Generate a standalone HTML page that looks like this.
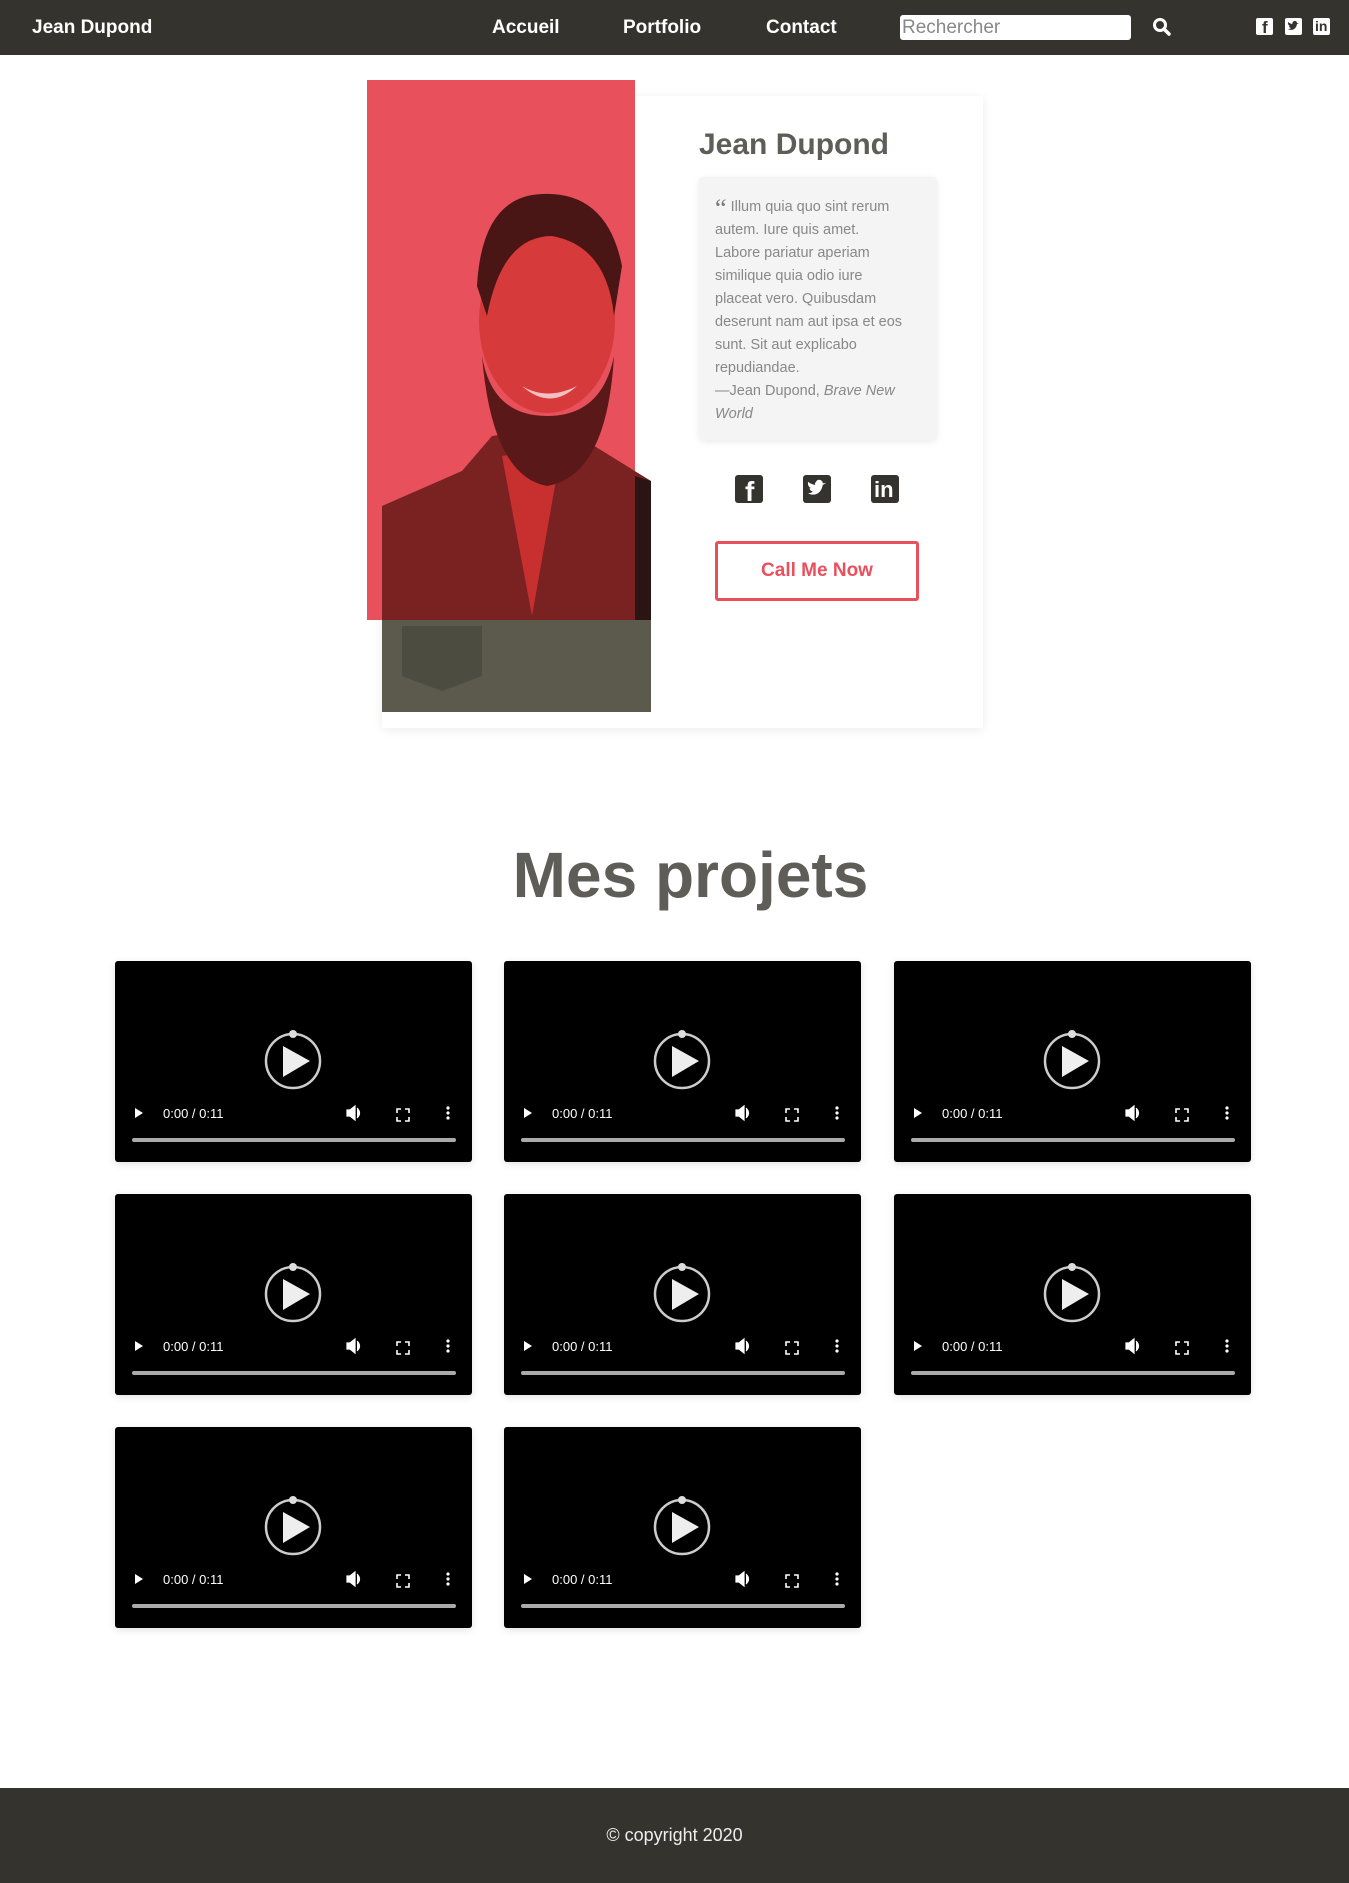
<!DOCTYPE html>
<html><head><meta charset="utf-8">
<style>
*{margin:0;padding:0;box-sizing:border-box}
body{width:1349px;height:1883px;position:relative;background:#fff;font-family:"Liberation Sans",sans-serif;overflow:hidden}
.nav{position:absolute;left:0;top:0;width:1349px;height:55px;background:#35332e;color:#fff;font-weight:bold}
.nav .t{position:absolute;top:17px;font-size:19px}
.search{position:absolute;left:900px;top:15px;width:231px;height:25px;background:#fff;border-radius:3px;color:#888;font-size:19px;font-weight:normal;padding-left:2px;line-height:25px}
.ni{position:absolute;top:18px;width:17px;height:17px;background:#fff;border-radius:2px}
.card{position:absolute;left:382px;top:96px;width:601px;height:632px;background:#fff;box-shadow:0 2px 10px rgba(0,0,0,.08)}
.red{position:absolute;left:367px;top:80px;width:268px;height:540px;background:#e8505c}
.name{position:absolute;left:699px;top:128px;font-size:30px;font-weight:bold;color:#5e5d58}
.quote{position:absolute;left:699px;top:177px;width:238px;height:263px;background:#f4f4f4;box-shadow:0 2px 8px rgba(0,0,0,.08);border-radius:4px;padding:19px 16px;font-size:14.5px;line-height:23px;color:#888;font-weight:300;white-space:nowrap}
.si{position:absolute;top:475px;width:28px;height:28px;background:#35332e;border-radius:3px}
.btn{position:absolute;left:715px;top:541px;width:204px;height:60px;border:3px solid #e8505c;border-radius:3px;color:#e8505c;font-weight:bold;font-size:19px;text-align:center;line-height:54px}
h2{position:absolute;left:16px;width:1349px;top:838px;text-align:center;font-size:64px;color:#5e5d58}
.v{position:absolute;width:357px;height:201px;background:#000;border-radius:3px;box-shadow:0 2px 8px rgba(0,0,0,.12)}
.v svg{position:absolute;left:0;top:0}
.foot{position:absolute;left:0;top:1788px;width:1349px;height:95px;background:#35332e;color:#eee;text-align:center;font-size:18px;line-height:95px;font-weight:300}
</style></head><body>
<div class="nav">
<div class="t" style="left:32px">Jean Dupond</div>
<div class="t" style="left:492px">Accueil</div>
<div class="t" style="left:623px">Portfolio</div>
<div class="t" style="left:766px">Contact</div>
<div class="search">Rechercher</div>
<svg style="position:absolute;left:1152px;top:17px" width="20" height="20" viewBox="0 0 20 20"><circle cx="8" cy="8" r="5.5" fill="none" stroke="#fff" stroke-width="3"/><line x1="12" y1="12" x2="17" y2="17" stroke="#fff" stroke-width="3.5" stroke-linecap="round"/></svg>
<div class="ni" style="left:1256px"><span style="position:absolute;left:6px;top:0;color:#35332e;font-size:17px">f</span></div>
<div class="ni" style="left:1285px"><svg width="17" height="17" viewBox="0 0 17 17"><path d="M3 11c3 2 8 1 9-5l2-1-2 0c0-2-3-3-4-1-1 1-1 2 0 2C6 6 4 5 3 4c0 2 0 3 2 4H4c0 1 1 2 2 2-1 1-2 1-3 1z" fill="#35332e"/></svg></div>
<div class="ni" style="left:1313px"><span style="position:absolute;left:2px;top:0;color:#35332e;font-size:14px;font-weight:bold">in</span></div>
</div>

<div class="card"></div>
<svg style="position:absolute;left:382px;top:96px" width="269" height="616" viewBox="0 0 269 616">
<rect width="269" height="616" fill="#e8505c"/>
<rect x="253" width="16" height="400" fill="#fff"/>
<path d="M0 410 L80 375 L110 340 L180 330 L269 385 L269 524 L0 524z" fill="#7a2121"/>
<path d="M253 380 L269 385 L269 524 L253 524z" fill="#2a1414"/>
<path d="M120 360 L150 520 L180 350z" fill="#c83030"/>
<ellipse cx="165" cy="225" rx="68" ry="92" fill="#d63a3a"/>
<path d="M95 190 Q100 100 160 98 Q225 95 240 170 L232 220 Q225 150 170 140 Q120 140 105 220z" fill="#4a1515"/>
<path d="M100 260 Q110 380 165 390 Q225 380 232 260 Q220 320 165 320 Q110 320 100 260z" fill="#5a1818"/>
<path d="M140 290 Q165 305 195 290 Q168 315 140 290z" fill="#f2c0c0"/>
<rect y="524" width="269" height="92" fill="#5b5a4c"/>
<path d="M20 530 L100 530 L100 580 L60 595 L20 580z" fill="#4d4c40"/>
</svg>
<div class="red" style="width:15px;left:367px"></div>
<div class="red" style="height:16px;left:367px;width:268px"></div>

<div class="name">Jean Dupond</div>
<div class="quote"><b style="color:#777;font-size:26px;line-height:10px;font-family:'Liberation Serif',serif;vertical-align:-6px">&ldquo;</b> Illum quia quo sint rerum<br>autem. Iure quis amet.<br>Labore pariatur aperiam<br>similique quia odio iure<br>placeat vero. Quibusdam<br>deserunt nam aut ipsa et eos<br>sunt. Sit aut explicabo<br>repudiandae.<br>—Jean Dupond, <i>Brave New</i><br><i>World</i></div>
<div class="si" style="left:735px"><span style="position:absolute;left:10px;top:1px;color:#fff;font-size:28px;font-weight:bold">f</span></div>
<div class="si" style="left:803px"><svg width="28" height="28" viewBox="0 0 17 17"><path d="M3 11c3 2 8 1 9-5l2-1-2 0c0-2-3-3-4-1-1 1-1 2 0 2C6 6 4 5 3 4c0 2 0 3 2 4H4c0 1 1 2 2 2-1 1-2 1-3 1z" fill="#fff"/></svg></div>
<div class="si" style="left:871px"><span style="position:absolute;left:3px;top:2px;color:#fff;font-size:22px;font-weight:bold">in</span></div>
<div class="btn">Call Me Now</div>

<h2>Mes projets</h2>

<svg width="0" height="0" style="position:absolute"><defs><g id="vc">
<circle cx="178" cy="100" r="27" fill="none" stroke="#ccc" stroke-width="2.5"/>
<circle cx="178" cy="73" r="4" fill="#ddd"/>
<path d="M168 85 L195 100 L168 116z" fill="#eee"/>
<path d="M20 147 L28 152 L20 157z" fill="#fff"/>
<text x="48" y="157" fill="#fff" font-family="Liberation Sans,sans-serif" font-size="13">0:00 / 0:11</text>
<path d="M232 149 h3 l5 -4 v14 l-5 -4 h-3z M242 147 q5 5 0 10" fill="#fff" stroke="#fff" stroke-width="1.2"/>
<path d="M282 152v-4h4 M290 148h4v4 M294 156v4h-4 M286 160h-4v-4" fill="none" stroke="#fff" stroke-width="1.6"/>
<circle cx="333" cy="147" r="1.6" fill="#fff"/><circle cx="333" cy="152" r="1.6" fill="#fff"/><circle cx="333" cy="157" r="1.6" fill="#fff"/>
<rect x="17" y="177" width="324" height="4" rx="2" fill="#aaa"/>
</g></defs></svg>

<div class="v" style="left:115px;top:961px"><svg width="357" height="201"><use href="#vc"/></svg></div>
<div class="v" style="left:504px;top:961px"><svg width="357" height="201"><use href="#vc"/></svg></div>
<div class="v" style="left:894px;top:961px"><svg width="357" height="201"><use href="#vc"/></svg></div>
<div class="v" style="left:115px;top:1194px"><svg width="357" height="201"><use href="#vc"/></svg></div>
<div class="v" style="left:504px;top:1194px"><svg width="357" height="201"><use href="#vc"/></svg></div>
<div class="v" style="left:894px;top:1194px"><svg width="357" height="201"><use href="#vc"/></svg></div>
<div class="v" style="left:115px;top:1427px"><svg width="357" height="201"><use href="#vc"/></svg></div>
<div class="v" style="left:504px;top:1427px"><svg width="357" height="201"><use href="#vc"/></svg></div>

<div class="foot">© copyright 2020</div>
</body></html>
